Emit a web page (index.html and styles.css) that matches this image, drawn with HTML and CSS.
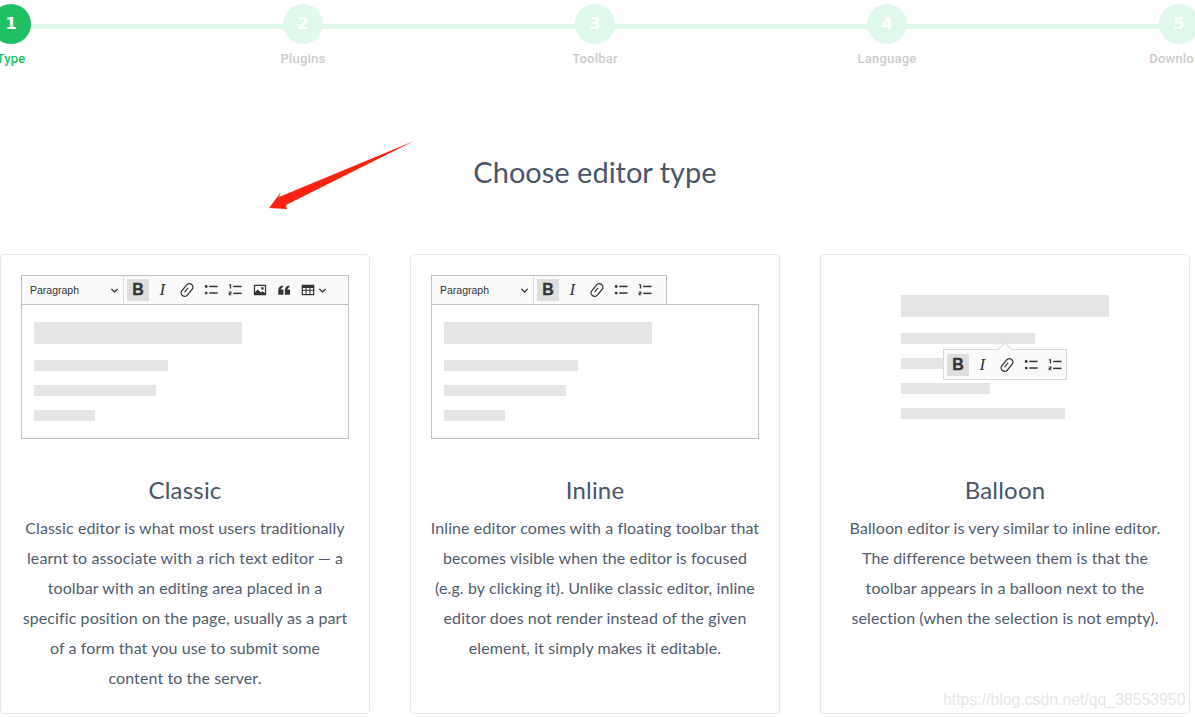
FILE: index.html
```html
<!DOCTYPE html>
<html>
<head>
    <meta charset="utf-8">
    <title>Choose editor type</title>
    <link rel="stylesheet" href="styles.css">
</head>
<body>
    <svg class="sprite" width="0" height="0">
        <symbol id="icon-link" viewBox="0 0 16 16">
            <rect x="-0.2" y="4" width="16.400" height="8" rx="4" transform="rotate(-50 8 8)" fill="none" stroke="currentColor" stroke-width="1.500"/>
            <path d="M5.200 10.300 9.300 5.600" fill="none" stroke="currentColor" stroke-width="1.300"/>
        </symbol>
        <symbol id="icon-bullets" viewBox="0 0 16 16">
            <circle cx="2.500" cy="4" r="1.600" fill="currentColor"/>
            <circle cx="2.500" cy="11.500" r="1.600" fill="currentColor"/>
            <rect x="6" y="3.100" width="9.500" height="1.700" fill="currentColor"/>
            <rect x="6" y="10.600" width="9.500" height="1.700" fill="currentColor"/>
        </symbol>
        <symbol id="icon-numbers" viewBox="0 0 16 16">
            <path d="M1 1.500h2.600v4.800H2.100V2.700H1z" fill="currentColor"/>
            <path d="M.8 9.800h3.200v2.400H2.300v.8H4v1.100H.8v-2.700h1.700v-.5H.8z" fill="currentColor"/>
            <rect x="6" y="3.100" width="9.500" height="1.700" fill="currentColor"/>
            <rect x="6" y="11" width="9.500" height="1.700" fill="currentColor"/>
        </symbol>
        <symbol id="icon-image" viewBox="0 0 16 16">
            <path fill-rule="evenodd" d="M1 2h14v12H1zM2.400 3.400v7l3.200-3 3.600 3.400 1.700-1.300 2.700 2V3.400zM10.800 4.700a1.500 1.500 0 1 1 0 3 1.500 1.500 0 0 1 0-3z" fill="currentColor"/>
        </symbol>
        <symbol id="icon-quote" viewBox="0 0 16 16">
            <path d="M1.500 13.500V8.500C1.500 5.400 3.300 3.200 6.700 2.800v2.100C5.300 5.300 4.500 6.300 4.400 7.500h3v6zM9 13.500V8.500c0-3.100 1.800-5.300 5.200-5.700v2.100c-1.400.4-2.200 1.400-2.300 2.600h3v6z" fill="currentColor"/>
        </symbol>
        <symbol id="icon-table" viewBox="0 0 16 16">
            <path fill-rule="evenodd" d="M.8 2h14.400v12H.8zM2.200 5.600v2h3v-2zM6.400 5.600v2h3.200v-2zM10.800 5.600v2h3v-2zM2.200 8.800v3.800h3V8.800zM6.400 8.800v3.800h3.200V8.800zM10.800 8.800v3.800h3V8.800z" fill="currentColor"/>
        </symbol>
        <symbol id="icon-chevron" viewBox="0 0 10 10">
            <path d="M1.500 3.200 5 6.700l3.500-3.500" fill="none" stroke="currentColor" stroke-width="1.500"/>
        </symbol>
    </svg>

    <ol class="stepper">
        <li class="step active"><span class="step-num">1</span><span class="step-label">Type</span></li>
        <li class="step"><span class="step-num">2</span><span class="step-label">Plugins</span></li>
        <li class="step"><span class="step-num">3</span><span class="step-label">Toolbar</span></li>
        <li class="step"><span class="step-num">4</span><span class="step-label">Language</span></li>
        <li class="step"><span class="step-num">5</span><span class="step-label">Download</span></li>
    </ol>

    <h1 class="page-title">Choose editor type</h1>

    <div class="cards">
        <div class="card">
            <div class="mock">
                <div class="toolbar toolbar-full">
                    <div class="dropdown">Paragraph <svg class="chevron"><use href="#icon-chevron"/></svg></div>
                    <div class="tools">
                        <span class="tool tool-on tool-b">B</span>
                        <span class="tool tool-i">I</span>
                        <span class="tool"><svg class="ico"><use href="#icon-link"/></svg></span>
                        <span class="tool"><svg class="ico"><use href="#icon-bullets"/></svg></span>
                        <span class="tool"><svg class="ico"><use href="#icon-numbers"/></svg></span>
                        <span class="tool"><svg class="ico"><use href="#icon-image"/></svg></span>
                        <span class="tool"><svg class="ico"><use href="#icon-quote"/></svg></span>
                        <span class="tool tool-wide"><svg class="ico"><use href="#icon-table"/></svg><svg class="chevron"><use href="#icon-chevron"/></svg></span>
                    </div>
                </div>
                <div class="editor">
                    <div class="bar bar-head"></div>
                    <div class="bar bar-a"></div>
                    <div class="bar bar-b"></div>
                    <div class="bar bar-c"></div>
                </div>
            </div>
            <h2>Classic</h2>
            <p>Classic editor is what most users traditionally<br>learnt to associate with a rich text editor — a<br>toolbar with an editing area placed in a<br>specific position on the page, usually as a part<br>of a form that you use to submit some<br>content to the server.</p>
        </div>

        <div class="card">
            <div class="mock">
                <div class="toolbar toolbar-short">
                    <div class="dropdown">Paragraph <svg class="chevron"><use href="#icon-chevron"/></svg></div>
                    <div class="tools">
                        <span class="tool tool-on tool-b">B</span>
                        <span class="tool tool-i">I</span>
                        <span class="tool"><svg class="ico"><use href="#icon-link"/></svg></span>
                        <span class="tool"><svg class="ico"><use href="#icon-bullets"/></svg></span>
                        <span class="tool"><svg class="ico"><use href="#icon-numbers"/></svg></span>
                    </div>
                </div>
                <div class="editor">
                    <div class="bar bar-head"></div>
                    <div class="bar bar-a"></div>
                    <div class="bar bar-b"></div>
                    <div class="bar bar-c"></div>
                </div>
            </div>
            <h2>Inline</h2>
            <p>Inline editor comes with a floating toolbar that<br>becomes visible when the editor is focused<br>(e.g. by clicking it). Unlike classic editor, inline<br>editor does not render instead of the given<br>element, it simply makes it editable.</p>
        </div>

        <div class="card">
            <div class="mock mock-balloon">
                <div class="bar bar-head"></div>
                <div class="bar bar-a"></div>
                <div class="bar bar-d"></div>
                <div class="bar bar-e"></div>
                <div class="bar bar-f"></div>
                <div class="balloon">
                    <span class="tool tool-on tool-b">B</span>
                    <span class="tool tool-i">I</span>
                    <span class="tool"><svg class="ico"><use href="#icon-link"/></svg></span>
                    <span class="tool"><svg class="ico"><use href="#icon-bullets"/></svg></span>
                    <span class="tool"><svg class="ico"><use href="#icon-numbers"/></svg></span>
                </div>
            </div>
            <h2>Balloon</h2>
            <p>Balloon editor is very similar to inline editor.<br>The difference between them is that the<br>toolbar appears in a balloon next to the<br>selection (when the selection is not empty).</p>
        </div>
    </div>

    <!-- annotation + watermark sit on top of the screenshot -->
    <svg class="arrow" width="160" height="80" viewBox="260 135 160 80">
        <polygon points="414,141 279,197 281,192 269,208 287,209 286,205" fill="#fb2213"/>
    </svg>
    <div class="watermark">https://blog.csdn.net/qq_38553950</div>
</body>
</html>
```

FILE: styles.css
```css
* {
    box-sizing: border-box;
}

html, body {
    height: 717px;
    overflow: hidden;
}

body {
    margin: 0;
    position: relative;
    background: #fff;
    font-family: Lato, "Open Sans", sans-serif;
    color: #505c6e;
}

.sprite {
    display: none;
}

/* stepper */
.stepper {
    display: flex;
    width: 1460px;
    margin: 0 0 0 -135px;
    padding: 4px 0 0;
    list-style: none;
}

.step {
    position: relative;
    flex: 0 0 292px;
    display: flex;
    flex-direction: column;
    align-items: center;
}

.step::after {
    content: "";
    position: absolute;
    top: 20px;
    left: 50%;
    width: 100%;
    height: 5px;
    background: #e0f8ec;
}

.step:last-child::after {
    display: none;
}

.step-num {
    position: relative;
    z-index: 1;
    width: 40px;
    height: 40px;
    border-radius: 50%;
    background: #e0f8ec;
    color: #fff;
    font: bold 16px/40px "DejaVu Sans", sans-serif;
    text-align: center;
}

.step-label {
    margin-top: 7px;
    font: 500 13px/16px Roboto, sans-serif;
    letter-spacing: 0.2px;
    color: #ccc;
}

.active .step-num {
    background: #20c065;
}

.active .step-label {
    color: #20c065;
}

.page-title {
    width: 1190px;
    margin: 85px 0 0;
    font-size: 29px;
    font-weight: 400;
    line-height: 40px;
    text-align: center;
    color: #4a5568;
}

/* cards */
.cards {
    display: flex;
    gap: 40px;
    margin-top: 62px;
}

.card {
    flex: 0 0 370px;
    min-width: 0;
    height: 460px;
    padding: 20px;
    border: 1px solid #e6e8ea;
    border-radius: 4px;
    text-align: center;
}

.card h2 {
    margin: 34px 0 0;
    font-size: 24px;
    font-weight: 400;
    line-height: 34px;
    letter-spacing: 0.2px;
    color: #4a5568;
}

.card p {
    margin: 6px -10px 0;
    font-size: 16px;
    line-height: 30px;
    letter-spacing: 0.1px;
    white-space: nowrap;
}

.mock {
    height: 164px;
    text-align: left;
}

.toolbar {
    display: flex;
    height: 30px;
    margin-bottom: -1px;
    border: 1px solid #c0c0c0;
    background: #fafafa;
    color: #333;
}

.toolbar-full {
    width: 328px;
}

.toolbar-short {
    width: 236px;
}

.dropdown {
    display: flex;
    flex: 0 0 102px;
    align-items: center;
    justify-content: space-between;
    padding: 0 4px 0 8px;
    border-right: 1px solid #dcdcdc;
    font: 10.500px "Liberation Sans", sans-serif;
}

.tools, .balloon {
    display: flex;
    align-items: center;
    gap: 2px;
    padding-left: 3px;
}

.tool {
    display: flex;
    flex: 0 0 22.300px;
    height: 22px;
    align-items: center;
    justify-content: center;
    color: #333;
}

.tool-wide {
    flex-basis: 34px;
    gap: 3px;
}

.tool-on {
    background: #dedede;
}

.tool-b {
    font: bold 16px "Liberation Sans", sans-serif;
    -webkit-text-stroke: 0.3px #333;
}

.tool-i {
    font: italic 17px "Liberation Serif", serif;
}

.ico {
    width: 14px;
    height: 14px;
}

.chevron {
    width: 9px;
    height: 9px;
}

.editor {
    height: 135px;
    width: 328px;
    padding: 17px 12px 0;
    border: 1px solid #c0c0c0;
    background: #fff;
}

.bar {
    height: 11px;
    margin-bottom: 14px;
    background: #e5e5e5;
}

.bar-head {
    width: 208px;
    height: 22px;
    margin-bottom: 16px;
}

.bar-a {
    width: 134px;
}

.bar-b {
    width: 122px;
}

.bar-c {
    width: 61px;
}

.bar-d {
    width: 60px;
}

.bar-e {
    width: 89px;
}

.bar-f {
    width: 164px;
}

.mock-balloon {
    position: relative;
    padding: 20px 0 0 60px;
}

.balloon {
    position: absolute;
    top: 74px;
    left: 102px;
    width: 124px;
    height: 31px;
    border: 1px solid #d9d9d9;
    background: #fafafa;
}

.balloon::before {
    content: "";
    position: absolute;
    top: -6px;
    left: 56px;
    width: 9px;
    height: 9px;
    border-top: 1px solid #d9d9d9;
    border-left: 1px solid #d9d9d9;
    background: #fafafa;
    transform: rotate(45deg);
}

/* overlays */
.arrow {
    position: absolute;
    top: 135px;
    left: 260px;
}

.watermark {
    position: absolute;
    top: 690px;
    left: 943px;
    font: 15.800px/20px "Liberation Sans", sans-serif;
    color: #e6e6e6;
    white-space: nowrap;
}
```
